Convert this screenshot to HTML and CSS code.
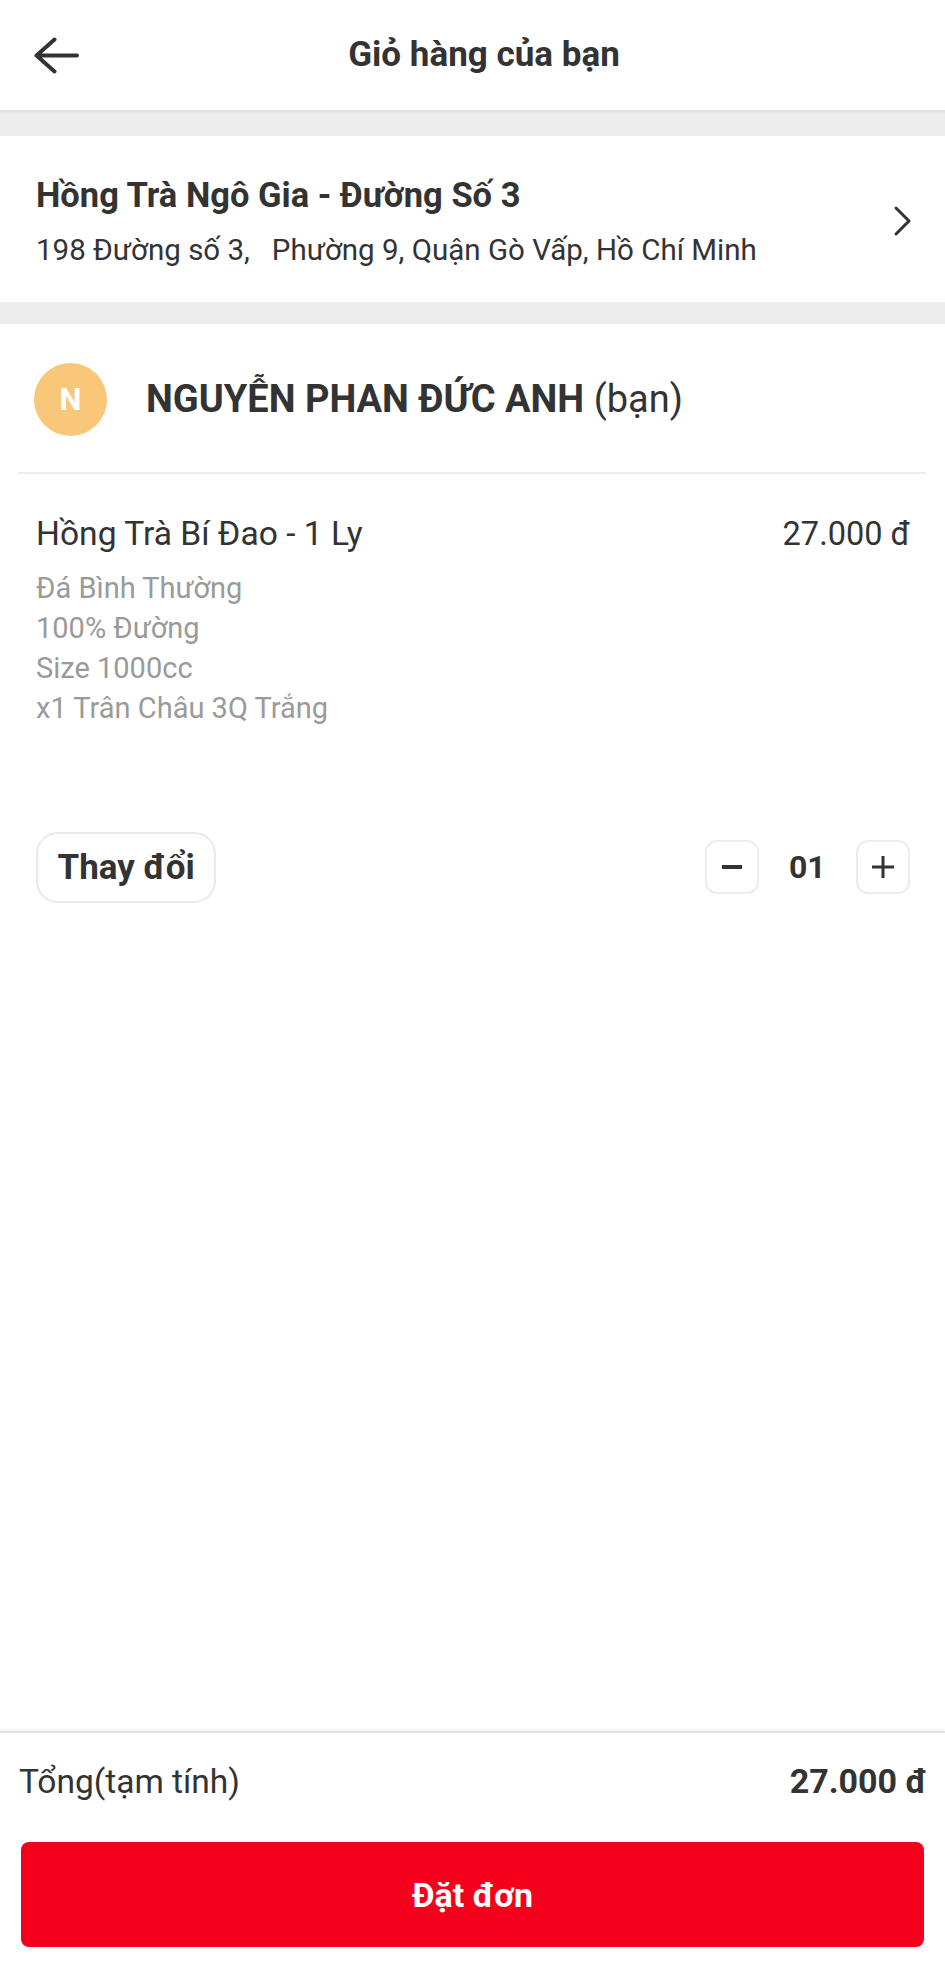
FILE: index.html
```html
<!DOCTYPE html>
<html lang="vi">
<head>
<meta charset="utf-8">
<title>Giỏ hàng của bạn</title>
<link rel="stylesheet" href="styles.css">
</head>
<body>
<div class="app">
  <header class="header">
    <svg class="back" viewBox="0 0 45 37" aria-hidden="true">
      <path d="M2.5 18.5 H43 M20.5 2.5 L2.5 18.5 L20.5 34.5" fill="none" stroke="#333" stroke-width="4" stroke-linecap="round" stroke-linejoin="round"/>
    </svg>
    <h1 class="title">Giỏ hàng của bạn</h1>
  </header>
  <div class="band band-top"></div>
  <section class="store">
    <div class="store-info">
      <div class="store-name">Hồng Trà Ngô Gia - Đường Số 3</div>
      <div class="store-addr">198 Đường số 3,   Phường 9, Quận Gò Vấp, Hồ Chí Minh</div>
    </div>
    <svg class="chev" viewBox="0 0 20 32" aria-hidden="true">
      <path d="M3 3 L16 16 L3 29" fill="none" stroke="#333" stroke-width="3" stroke-linecap="round" stroke-linejoin="round"/>
    </svg>
  </section>
  <div class="band band-mid"></div>
  <section class="user">
    <div class="avatar">N</div>
    <div class="user-name">NGUYỄN PHAN ĐỨC ANH <span class="you">(bạn)</span></div>
  </section>
  <div class="divider"></div>
  <main class="item">
    <div class="item-top">
      <div class="item-name">Hồng Trà Bí Đao - 1 Ly</div>
      <div class="item-price">27.000 đ</div>
    </div>
    <ul class="opts">
      <li>Đá Bình Thường</li>
      <li>100% Đường</li>
      <li>Size 1000cc</li>
      <li>x1 Trân Châu 3Q Trắng</li>
    </ul>
    <div class="actions">
      <button class="change">Thay đổi</button>
      <div class="qty">
        <button class="qbtn" aria-label="Giảm">
          <svg width="24" height="24" viewBox="0 0 24 24" aria-hidden="true"><path d="M2 12 H22" stroke="#333" stroke-width="4"/></svg>
        </button>
        <span class="qval">01</span>
        <button class="qbtn" aria-label="Tăng">
          <svg width="24" height="24" viewBox="0 0 24 24" aria-hidden="true"><path d="M1 12 H23 M12 1 V23" stroke="#333" stroke-width="3"/></svg>
        </button>
      </div>
    </div>
  </main>
  <footer class="footer">
    <div class="total">
      <span class="total-label">Tổng(tạm tính)</span>
      <span class="total-val">27.000 đ</span>
    </div>
    <button class="order">Đặt đơn</button>
  </footer>
</div>
</body>
</html>
```
FILE: styles.css
```css
* { box-sizing: border-box; margin: 0; padding: 0; }
html, body { background: #fff; }
body { font-family: Roboto, "Noto Sans", sans-serif; color: #333; }

.app { height: 1968px; display: flex; flex-direction: column; overflow: hidden; }

.header { flex: none; height: 110px; display: flex; align-items: center; padding: 0 56px 0 34px; }
.back { flex: none; width: 45px; height: 37px; display: block; }
.title { flex: 1; text-align: center; font-size: 35px; font-weight: 700; line-height: 44px; color: #333; }

.band { flex: none; background: #ececec; }
.band-top { height: 26px; box-shadow: inset 0 3px 2px -1px rgba(0,0,0,0.06); }
.band-mid { height: 22px; }

.store { flex: none; display: flex; align-items: center; padding: 36px 32px 32px 36px; }
.store-info { flex: 1; }
.store-name { font-size: 34.5px; font-weight: 700; line-height: 46px; margin-bottom: 12px; }
.store-addr { font-size: 29.5px; line-height: 40px; white-space: pre; }
.chev { flex: none; width: 20px; height: 32px; display: block; }

.user { flex: none; display: flex; align-items: center; gap: 39px; padding: 38.5px 34px 36.5px; }
.avatar { flex: none; width: 73px; height: 73px; border-radius: 50%; background: #f8c77a; color: #fff; font-weight: 700; font-size: 31px; display: flex; align-items: center; justify-content: center; }
.user-name { font-size: 38px; line-height: 52px; font-weight: 700; white-space: nowrap; }
.you { font-weight: 400; }

.divider { flex: none; height: 2px; background: #ededed; margin: 0 19px 0 18px; }

.item { flex: 1; padding: 37.5px 35px 0 36px; }
.item-top { display: flex; justify-content: space-between; align-items: baseline; }
.item-name { font-size: 33.6px; line-height: 44px; }
.item-price { font-size: 32.5px; line-height: 44px; }
.opts { margin-top: 12px; list-style: none; color: #9a9a9a; font-size: 29px; line-height: 40px; }

.actions { margin-top: 104.4px; display: flex; justify-content: space-between; align-items: center; }
.change { height: 71px; padding: 0 19.5px; border: 2px solid #e9e9e9; border-radius: 22px; background: #fff; color: #333; font-family: Roboto, "Noto Sans", sans-serif; font-size: 35px; font-weight: 700; }
.qty { display: flex; align-items: center; }
.qbtn { width: 54px; height: 54px; border: 2px solid #ececec; border-radius: 12px; background: #fff; display: flex; align-items: center; justify-content: center; }
.qbtn svg { display: block; }
.qval { width: 36px; margin: 0 31px 0 30px; text-align: center; font-size: 32px; font-weight: 700; }

.footer { flex: none; border-top: 2px solid #e4e4e4; box-shadow: 0 -2px 3px rgba(0,0,0,0.04); padding: 24.5px 21px 21px; }
.total { display: flex; justify-content: space-between; align-items: baseline; margin: 0 -3px 0 -2px; }
.total-label { font-size: 33.5px; line-height: 46px; }
.total-val { font-size: 34px; line-height: 46px; font-weight: 700; }
.order { display: block; margin-top: 37.5px; width: 100%; height: 105px; border: 0; border-radius: 8px; background: #f4001d; color: #fff; font-family: Roboto, "Noto Sans", sans-serif; font-size: 34px; font-weight: 700; }
```
